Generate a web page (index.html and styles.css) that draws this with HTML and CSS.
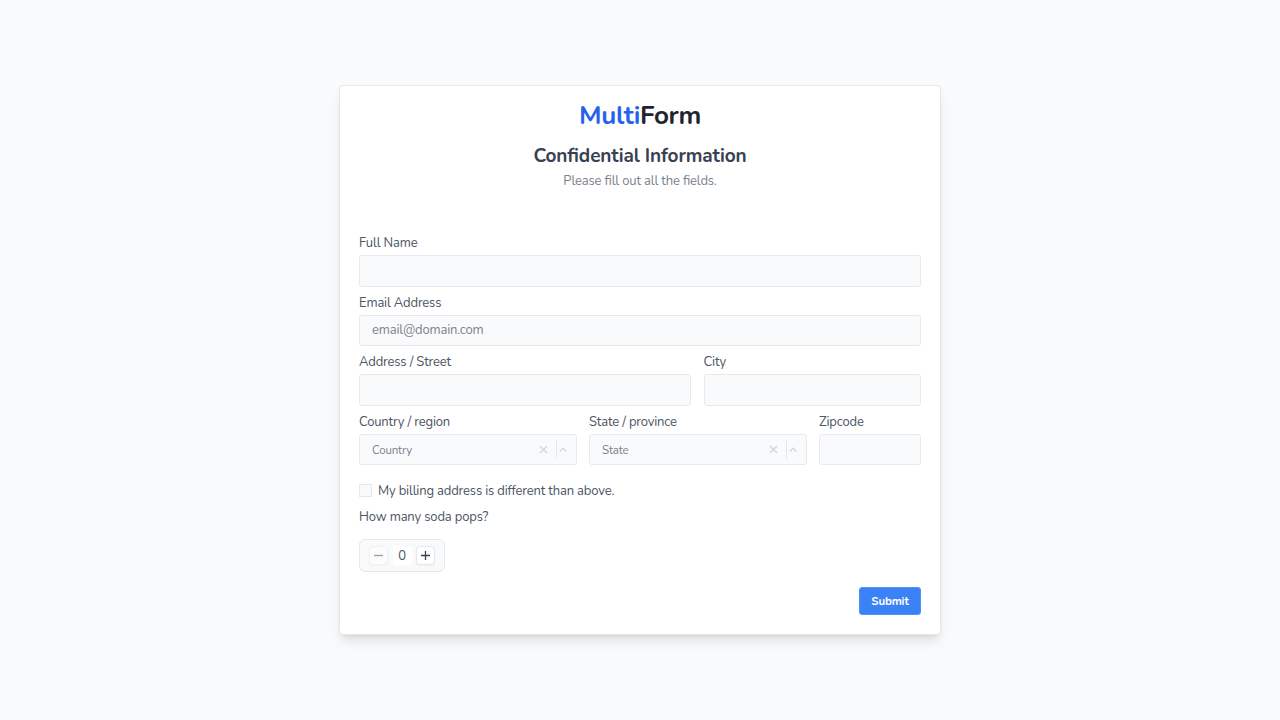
FILE: index.html
```html
<!DOCTYPE html>
<html lang="en">
<head>
<meta charset="utf-8">
<title>MultiForm</title>
<link rel="stylesheet" href="styles.css">
</head>
<body>
<form class="card">
  <h1 class="brand"><span class="brand-accent">Multi</span><span class="brand-rest">Form</span></h1>
  <h2 class="title">Confidential Information</h2>
  <p class="subtitle">Please fill out all the fields.</p>
  <div class="fields">
    <div class="row"><label class="field"><span class="label">Full Name</span><span class="box"></span></label></div>
    <div class="row"><label class="field"><span class="label">Email Address</span><span class="box"><span class="placeholder">email@domain.com</span></span></label></div>
    <div class="row row-address">
      <label class="field"><span class="label">Address / Street</span><span class="box"></span></label>
      <label class="field"><span class="label">City</span><span class="box"></span></label>
    </div>
    <div class="row row-region">
      <div class="field"><span class="label">Country / region</span>
        <div class="box"><span class="choice">Country</span>
          <svg class="controls" width="32" height="20" viewBox="0 0 32 20"><path class="mark" d="M4 6l7 7M11 6l-7 7"/><path class="divider" d="M20.5 0v19"/><path class="mark" d="M23.7 11.6l3.3-3.5 3.3 3.5"/></svg></div></div>
      <div class="field"><span class="label">State / province</span>
        <div class="box"><span class="choice">State</span>
          <svg class="controls" width="32" height="20" viewBox="0 0 32 20"><path class="mark" d="M4 6l7 7M11 6l-7 7"/><path class="divider" d="M20.5 0v19"/><path class="mark" d="M23.7 11.6l3.3-3.5 3.3 3.5"/></svg></div></div>
      <label class="field"><span class="label">Zipcode</span><span class="box"></span></label>
    </div>
  </div>
  <div class="billing"><span class="checkbox"></span><span>My billing address is different than above.</span></div>
  <div class="question">How many soda pops?</div>
  <div class="counter">
    <button class="step step-off" type="button" aria-label="Decrease"><svg width="11" height="11" viewBox="0 0 11 11"><path d="M1 5.5h9"/></svg></button>
    <span class="count">0</span>
    <button class="step" type="button" aria-label="Increase"><svg width="11" height="11" viewBox="0 0 11 11"><path d="M1 5.5h9M5.5 1v9"/></svg></button>
  </div>
  <button class="submit" type="button">Submit</button>
</form>
</body>
</html>
```
FILE: styles.css
```css
* { box-sizing: border-box; }
body {
  margin: 0;
  height: 720px;
  padding-top: 85px;
  background: #f9fafb;
  font-family: Nunito, Lato, "Open Sans", sans-serif;
  font-size: 13px;
  letter-spacing: -.16px;
  font-feature-settings: "liga" 1;
  color: #4b5563;
}
.card {
  display: flex;
  flex-direction: column;
  width: 602px;
  height: 550px;
  margin: 0 auto;
  padding: 0 19px;
  border: 1px solid #e5e7eb;
  border-radius: 4px;
  background: #fff;
  box-shadow: 0 8px 12px -2px rgba(0, 0, 0, .1), 0 3px 5px -3px rgba(0, 0, 0, .1);
}
.brand {
  margin: 12px 0 0;
  height: 36px;
  line-height: 36px;
  font-size: 26px;
  letter-spacing: -.3px;
  font-weight: 700;
  text-align: center;
}
.brand-accent { color: #2563eb; }
.brand-rest { color: #1f2430; }
.title {
  margin: 8.5px 0 0;
  height: 26px;
  line-height: 26px;
  font-size: 19px;
  letter-spacing: -.11px;
  font-weight: 700;
  text-align: center;
  color: #374151;
}
.subtitle {
  margin: 2px 0 0;
  height: 20px;
  line-height: 20px;
  text-align: center;
  color: #7b828d;
}
.fields { margin-top: 36.6px; height: 238.7px; }
.row { display: grid; height: 59.6px; column-gap: 12.5px; }
.row-address { grid-template-columns: 332px 217.5px; }
.row-region { grid-template-columns: 217.5px 217.5px 102px; }
.field { display: block; padding-top: 6px; }
.label { display: block; height: 22px; line-height: 20px; white-space: nowrap; }
.box {
  display: flex;
  align-items: center;
  height: 31.5px;
  padding-left: 12px;
  border: 1px solid #e7e9ed;
  border-radius: 3px;
  background: #f9fafb;
}
.placeholder { color: #7b828d; }
.choice { font-size: 11.5px; color: #7b828d; }
.controls { margin-left: auto; margin-right: 8px; flex: none; }
.controls path { fill: none; }
.mark { stroke: #d1d5db; stroke-width: 1.3; }
.divider { stroke: #e5e7eb; }
.billing { display: flex; align-items: center; margin-top: 15px; height: 20px; }
.checkbox { width: 13px; height: 13px; margin-right: 6px; border: 1px solid #e5e7eb; background: #f9fafb; }
.question { margin-top: 6.5px; height: 20px; line-height: 20px; }
.counter {
  display: flex;
  align-items: center;
  width: 86px;
  height: 33px;
  margin-top: 12px;
  padding-left: 9px;
  border: 1px solid #e5e7eb;
  border-radius: 6px;
  background: #f9fafb;
}
.step {
  display: grid;
  place-items: center;
  width: 19px;
  height: 19px;
  padding: 0;
  border: 1px solid #e5e7eb;
  border-radius: 4px;
  background: #fff;
  box-shadow: 0 1px 2px rgba(0, 0, 0, .05);
}
.step path { fill: none; stroke: #374151; stroke-width: 1.3; }
.step-off { opacity: .5; }
.count { width: 19px; height: 19px; margin: 0 4.5px; line-height: 20px; text-align: center; background: #fff; }
.submit {
  align-self: flex-end;
  width: 62px;
  height: 28px;
  margin-top: 14.9px;
  padding: 0;
  border: 1px solid #5292f8;
  border-radius: 3px;
  background: #3b82f6;
  color: #fff;
  font: 700 11.5px Nunito, Lato, sans-serif;
  letter-spacing: -.15px;
}
```
